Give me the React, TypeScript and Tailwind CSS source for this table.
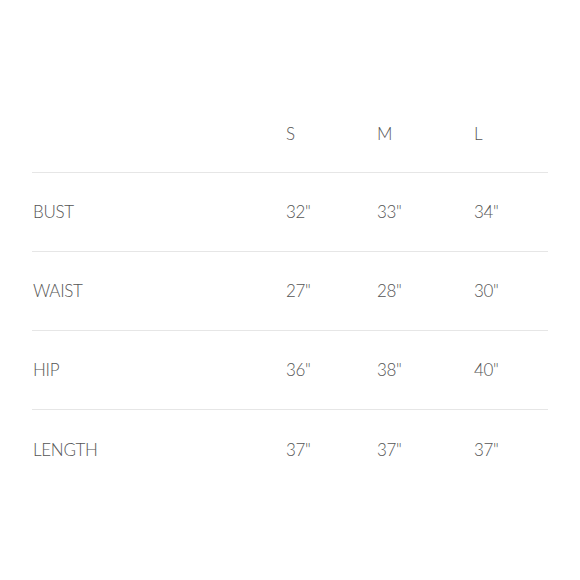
const SIZES = ["S", "M", "L"];

const ROWS: { label: string; values: string[] }[] = [
  { label: "BUST", values: ['32"', '33"', '34"'] },
  { label: "WAIST", values: ['27"', '28"', '30"'] },
  { label: "HIP", values: ['36"', '38"', '40"'] },
  { label: "LENGTH", values: ['37"', '37"', '37"'] },
];

const cols = "grid grid-cols-[254px_91px_97px_1fr] items-center";

export default function App() {
  return (
    <div className="h-[580px] w-[580px] bg-white font-['Lato','Liberation_Sans',sans-serif] text-[17px] font-light tracking-[-0.3px] text-[#555]">
      <div className="px-8 pt-[95px]">
        <div className={`${cols} h-[78px] border-b border-[#e6e6e6]`}>
          <span />
          {SIZES.map((s) => (
            <span key={s}>{s}</span>
          ))}
        </div>
        {ROWS.map((row, i) => (
          <div
            key={row.label}
            className={`${cols} h-[79px] ${i < ROWS.length - 1 ? "border-b border-[#e6e6e6]" : ""}`}
          >
            <span className="pl-px">{row.label}</span>
            {row.values.map((v, j) => (
              <span key={j}>{v}</span>
            ))}
          </div>
        ))}
      </div>
    </div>
  );
}
